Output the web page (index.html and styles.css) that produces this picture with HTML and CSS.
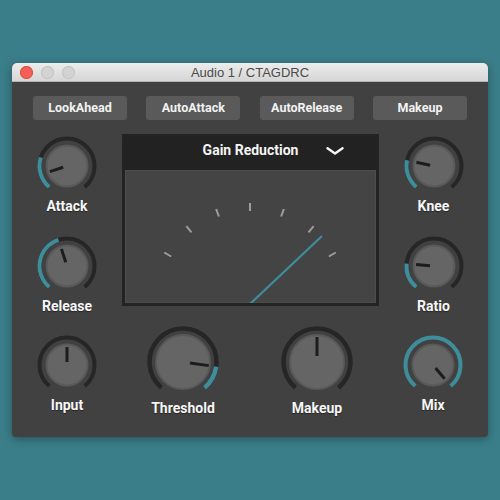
FILE: index.html
```html
<!DOCTYPE html>
<html>
<head>
<meta charset="utf-8">
<link rel="stylesheet" href="styles.css">
</head>
<body>
<div class="window">
  <div class="titlebar">
    <div class="lights">
      <span class="light close"></span>
      <span class="light"></span>
      <span class="light"></span>
    </div>
    <div class="title">Audio 1 / CTAGDRC</div>
  </div>
  <div class="content">
    <div class="buttons">
      <div class="btn">LookAhead</div>
      <div class="btn">AutoAttack</div>
      <div class="btn">AutoRelease</div>
      <div class="btn">Makeup</div>
    </div>
    <div class="main">
      <div class="knob k-attack">
        <svg class="small" viewBox="0 0 64 64">
          <circle class="face" cx="32" cy="32" r="20.5"/>
          <path class="track" d="M14.32 53.07 A27.5 27.5 0 1 1 49.68 53.07"/>
          <path class="value" d="M14.32 53.07 A27.5 27.5 0 0 1 5.84 23.50"/>
          <line class="pointer" x1="28.2" y1="33.24" x2="14.88" y2="37.56"/>
        </svg>
        <div class="label">Attack</div>
      </div>
      <div class="meter">
        <div class="meter-head">
          <span></span>
          <span class="meter-title">Gain Reduction</span>
          <span class="chev"><svg viewBox="0 0 18 8"><path d="M1.5 1.2 L9 6.5 L16.5 1.2"/></svg></span>
        </div>
        <div class="meter-body">
          <svg viewBox="0 0 251 133">
            <g class="ticks">
              <line x1="46.19" y1="86.5" x2="39.27" y2="82.5"/>
              <line x1="66.51" y1="62.29" x2="61.36" y2="56.16"/>
              <line x1="93.88" y1="46.49" x2="91.14" y2="38.97"/>
              <line x1="125" y1="41" x2="125" y2="33"/>
              <line x1="156.12" y1="46.49" x2="158.86" y2="38.97"/>
              <line x1="183.49" y1="62.29" x2="188.64" y2="56.16"/>
              <line x1="203.81" y1="86.5" x2="210.73" y2="82.5"/>
            </g>
            <line class="needle" x1="125" y1="134" x2="197" y2="66"/>
          </svg>
        </div>
      </div>
      <div class="knob k-knee">
        <svg class="small" viewBox="0 0 64 64">
          <circle class="face" cx="32" cy="32" r="20.5"/>
          <path class="track" d="M14.32 53.07 A27.5 27.5 0 1 1 49.68 53.07"/>
          <path class="value" d="M14.32 53.07 A27.5 27.5 0 0 1 5.10 26.28"/>
          <line class="pointer" x1="28.09" y1="31.17" x2="14.39" y2="28.26"/>
        </svg>
        <div class="label">Knee</div>
      </div>
      <div class="knob k-release">
        <svg class="small" viewBox="0 0 64 64">
          <circle class="face" cx="32" cy="32" r="20.5"/>
          <path class="track" d="M14.32 53.07 A27.5 27.5 0 1 1 49.68 53.07"/>
          <path class="value" d="M14.32 53.07 A27.5 27.5 0 0 1 23.50 5.85"/>
          <line class="pointer" x1="30.76" y1="28.2" x2="26.44" y2="14.88"/>
        </svg>
        <div class="label">Release</div>
      </div>
      <div class="knob k-ratio">
        <svg class="small" viewBox="0 0 64 64">
          <circle class="face" cx="32" cy="32" r="20.5"/>
          <path class="track" d="M14.32 53.07 A27.5 27.5 0 1 1 49.68 53.07"/>
          <path class="value" d="M14.32 53.07 A27.5 27.5 0 0 1 4.60 29.60"/>
          <line class="pointer" x1="28.02" y1="31.65" x2="14.07" y2="30.43"/>
        </svg>
        <div class="label">Ratio</div>
      </div>
    </div>
    <div class="bottom">
      <div class="knob low b-input">
        <svg class="small" viewBox="0 0 64 64">
          <circle class="face" cx="32" cy="32" r="20.5"/>
          <path class="track" d="M14.32 53.07 A27.5 27.5 0 1 1 49.68 53.07"/>
          <line class="pointer" x1="32" y1="29" x2="32" y2="14"/>
        </svg>
        <div class="label">Input</div>
      </div>
      <div class="knob b-threshold">
        <svg class="big" viewBox="0 0 76 76">
          <circle class="face" cx="38" cy="38" r="27"/>
          <path class="track" d="M16.47 63.66 A33.5 33.5 0 1 1 59.53 63.66"/>
          <path class="value" d="M71.17 42.66 A33.5 33.5 0 0 1 59.53 63.66"/>
          <line class="pointer" x1="44.94" y1="38.97" x2="63.75" y2="41.62"/>
        </svg>
        <div class="label">Threshold</div>
      </div>
      <div class="knob b-makeup">
        <svg class="big" viewBox="0 0 76 76">
          <circle class="face" cx="38" cy="38" r="27"/>
          <path class="track" d="M16.47 63.66 A33.5 33.5 0 1 1 59.53 63.66"/>
          <line class="pointer" x1="38" y1="32" x2="38" y2="13"/>
        </svg>
        <div class="label">Makeup</div>
      </div>
      <div class="knob low b-mix">
        <svg class="small" viewBox="0 0 64 64">
          <circle class="face" cx="32" cy="32" r="20.5"/>
          <path class="value" d="M14.32 53.07 A27.5 27.5 0 1 1 49.68 53.07"/>
          <line class="pointer" x1="34.57" y1="35.06" x2="43.57" y2="45.79"/>
        </svg>
        <div class="label">Mix</div>
      </div>
    </div>
  </div>
</div>
</body>
</html>
```

FILE: styles.css
```css
html, body {
  margin: 0;
  padding: 0;
}
body {
  background: #3a7e89;
  width: 500px;
  height: 500px;
  overflow: hidden;
  font-family: Roboto, "Liberation Sans", sans-serif;
}
.window {
  margin: 63px 0 0 12px;
  width: 476px;
  border-radius: 5px 5px 4px 4px;
  overflow: hidden;
  background: #414141;
  box-shadow: 0 2px 8px rgba(0, 0, 0, 0.35);
}
.titlebar {
  height: 19px;
  background: linear-gradient(#ececec, #d6d6d6);
  border-bottom: 1px solid #b4b4b4;
  box-sizing: border-box;
  display: grid;
  grid-template-columns: 1fr auto 1fr;
  align-items: center;
}
.lights {
  display: flex;
  gap: 8px;
  padding-left: 8px;
}
.light {
  width: 13px;
  height: 13px;
  border-radius: 50%;
  background: #d3d3d3;
  box-shadow: inset 0 0 0 1px #c2c2c2;
}
.light.close {
  background: #f15f57;
  box-shadow: inset 0 0 0 1px #de4c44;
}
.title {
  font-family: "Liberation Sans", Arial, sans-serif;
  font-size: 13px;
  color: #4b4b4b;
  line-height: 19px;
}
.content {
  padding: 14px 0 21px 0;
}
.buttons {
  display: flex;
  justify-content: space-between;
  padding: 0 21px;
  margin-bottom: 14px;
}
.btn {
  width: 94px;
  height: 24px;
  background: #5a5a5a;
  border-radius: 3px;
  color: #f2f2f2;
  font-weight: 700;
  font-size: 12.5px;
  line-height: 24px;
  text-align: center;
}
.main {
  display: grid;
  grid-template-columns: 110px 257px 109px;
  grid-template-rows: 100px 90px;
}
.k-attack { grid-column: 1; grid-row: 1; }
.k-release { grid-column: 1; grid-row: 2; }
.k-knee { grid-column: 3; grid-row: 1; }
.k-ratio { grid-column: 3; grid-row: 2; }
.meter {
  grid-column: 2;
  grid-row: 1 / span 2;
  height: 172px;
  box-sizing: border-box;
  border: 3px solid #232323;
  display: flex;
  flex-direction: column;
  align-self: start;
}
.meter-head {
  height: 33px;
  background: #222222;
  display: grid;
  grid-template-columns: 1fr auto 1fr;
  align-items: start;
  padding-top: 5px;
  box-sizing: border-box;
}
.meter-title {
  color: #f4f4f4;
  font-weight: 700;
  font-size: 14px;
  line-height: 16px;
}
.chev {
  padding-left: 28px;
  padding-top: 5px;
  line-height: 0;
}
.chev svg {
  width: 18px;
  height: 8px;
}
.chev path {
  fill: none;
  stroke: #f4f4f4;
  stroke-width: 2.4;
  stroke-linecap: round;
  stroke-linejoin: round;
}
.meter-body {
  height: 133px;
  background: #444444;
  box-shadow: inset 0 0 0 1px #4c4c4c;
  line-height: 0;
}
.meter-body svg {
  width: 251px;
  height: 133px;
}
.ticks line {
  stroke: #9d9d9d;
  stroke-width: 2;
}
.needle {
  stroke: #3e8d9a;
  stroke-width: 2.2;
}
.knob {
  display: flex;
  flex-direction: column;
  align-items: center;
}
.knob svg.small {
  width: 64px;
  height: 64px;
}
.knob svg.big {
  width: 76px;
  height: 76px;
}
.face {
  fill: #656565;
  stroke: #595959;
  stroke-width: 2;
}
.track {
  fill: none;
  stroke: #262626;
  stroke-width: 4;
}
.big .track, .big .value {
  stroke-width: 4.5;
}
.value {
  fill: none;
  stroke: #3e8d9a;
  stroke-width: 4;
}
.pointer {
  stroke: #1d1d1d;
  stroke-width: 3;
}
.label {
  color: #f6f6f6;
  font-weight: 700;
  font-size: 14px;
  line-height: 16px;
  text-shadow: 0 1px 1px rgba(0, 0, 0, 0.45);
}
.bottom {
  display: grid;
  grid-template-columns: 110px 122px 1fr 122px 110px;
}
.knob.low {
  padding-top: 9px;
}
.b-input { grid-column: 1; }
.b-threshold { grid-column: 2; }
.b-makeup { grid-column: 4; }
.b-mix { grid-column: 5; }
```
